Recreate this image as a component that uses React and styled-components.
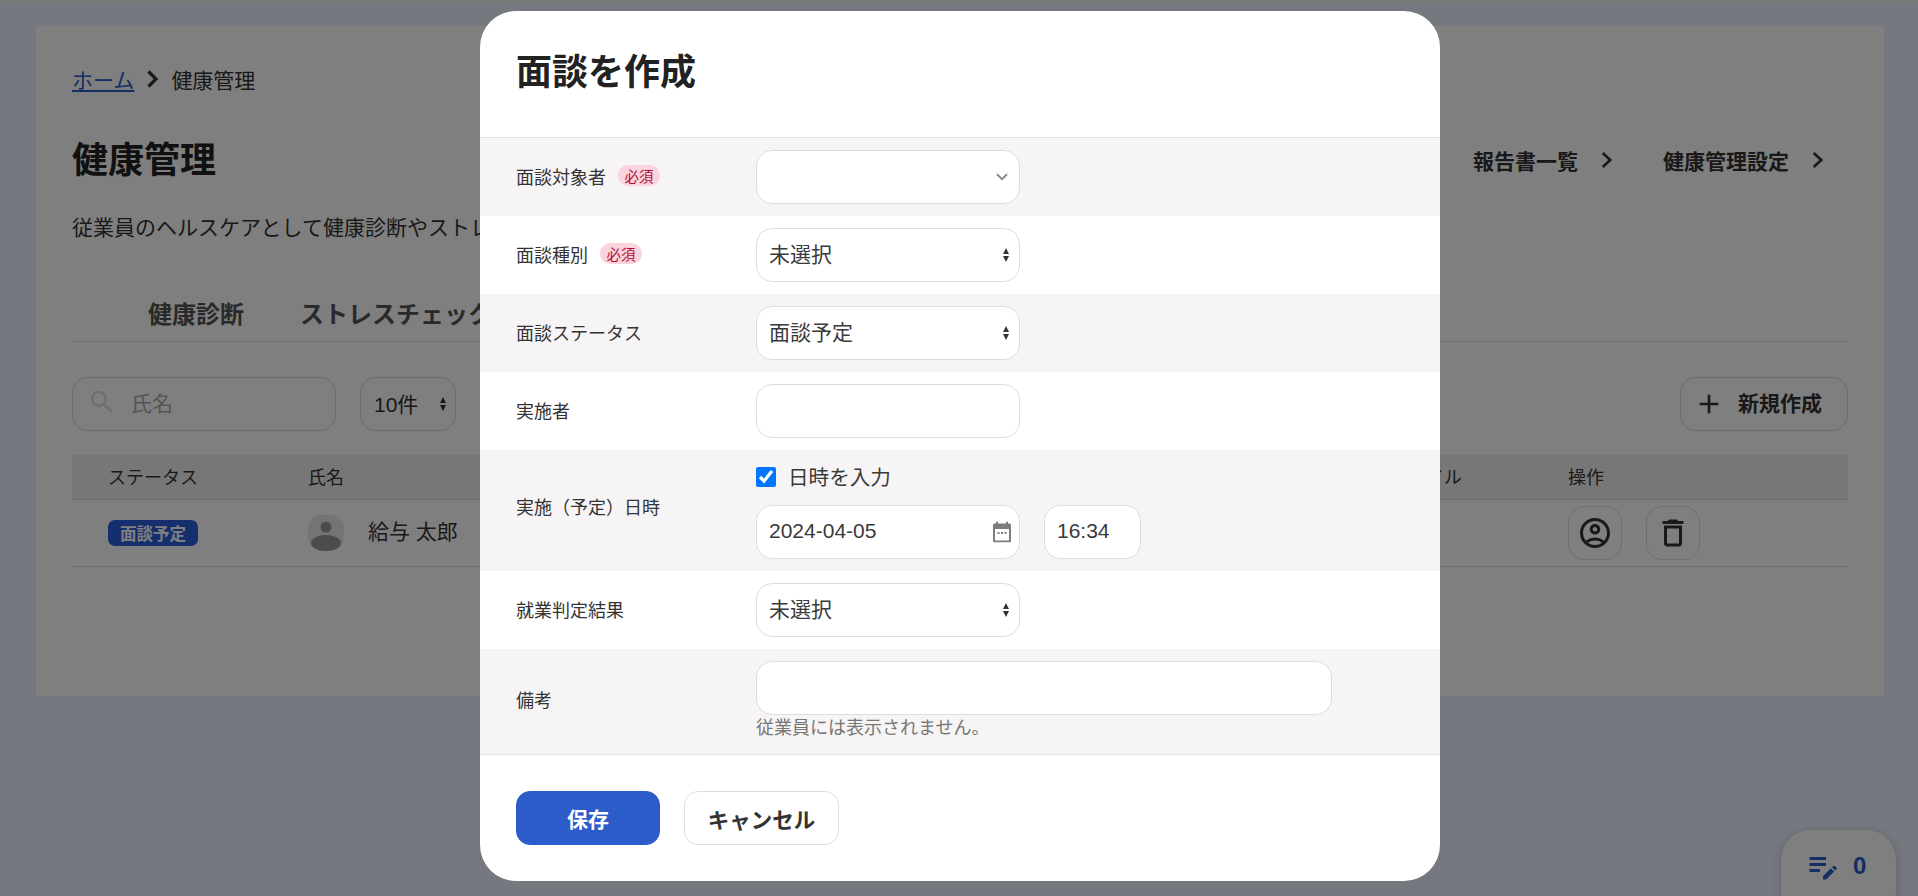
import React from 'react';
import styled, { createGlobalStyle } from 'styled-components';
import { MdOutlineAccountCircle, MdOutlineDelete, MdOutlineEditNote, MdSearch, MdAdd } from 'react-icons/md';

const FONT = `"Liberation Sans", "Noto Sans CJK JP", sans-serif`;

const Global = createGlobalStyle`
  html, body { margin: 0; padding: 0; height: 100%; overflow: hidden; }
  body { background: #eaf0fe; font-family: ${FONT}; color: #333; }
  * { box-sizing: border-box; }
  input, select, button { font-family: ${FONT}; }
`;

const Page = styled.div`
  width: 1918px;
  height: 896px;
  position: relative;
  overflow: hidden;
`;
const TopStrip = styled.div`
  height: 2px;
  background: #f6f4f6;
`;
const Card = styled.main`
  margin: 24px 34px 0 36px;
  width: 1848px;
  height: 670px;
  background: #fff;
  padding: 36px;
`;
const Crumbs = styled.nav`
  display: flex;
  align-items: center;
  height: 36px;
  padding-bottom: 2px;
  font-size: 21px;
  color: #333;
`;
const CrumbLink = styled.a`
  color: #2a5cc8;
  text-decoration: underline;
`;
const CrumbChevron = styled.svg`
  width: 14px;
  height: 18px;
  margin: 0 11px 0 12px;
`;
const TitleRow = styled.div`
  display: flex;
  justify-content: space-between;
  align-items: center;
  height: 54px;
  margin-top: 35px;
`;
const PageTitle = styled.h1`
  margin: -7px 0 0;
  font-size: 36px;
  font-weight: 700;
  color: #222;
`;
const SideLinks = styled.div`
  display: flex;
  align-items: center;
  margin-right: 24px;
`;
const SideLink = styled.a`
  display: flex;
  align-items: center;
  font-size: 21px;
  font-weight: 700;
  color: #333;
  margin-left: 50px;
`;
const SideChevron = styled.svg`
  width: 13px;
  height: 18px;
  margin-left: 22px;
`;
const Lead = styled.p`
  margin: 25px 0 0;
  font-size: 21px;
  line-height: 32px;
  color: #333;
`;
const Tabs = styled.div`
  display: flex;
  gap: 56px;
  margin-top: 53px;
  padding: 0 0 8px 76px;
  border-bottom: 1px solid #ddd;
`;
const Tab = styled.div`
  font-size: 24px;
  line-height: 36px;
  font-weight: 700;
  color: #555;
`;
const Toolbar = styled.div`
  display: flex;
  align-items: center;
  gap: 24px;
  margin-top: 35px;
`;
const Search = styled.div`
  width: 264px;
  height: 54px;
  display: flex;
  align-items: center;
  gap: 14px;
  padding: 0 0 4px 14px;
  border: 1px solid #d8d8d8;
  border-radius: 16px;
  font-size: 21px;
  color: #aaa;
`;
const CountSelect = styled.div`
  position: relative;
  width: 96px;
  height: 54px;
  display: flex;
  align-items: center;
  padding: 0 0 2px 13px;
  border: 1px solid #d8d8d8;
  border-radius: 16px;
  font-size: 21px;
  color: #333;
`;
const NewButton = styled.button`
  margin-left: auto;
  width: 168px;
  height: 54px;
  display: flex;
  align-items: center;
  gap: 13px;
  background: #fff;
  border: 1px solid #d8d8d8;
  border-radius: 16px;
  font-size: 21px;
  font-weight: 700;
  color: #333;
  padding: 0 0 0 12px;
`;
const LiftedText = styled.span`
  padding-bottom: ${p => p.$lift}px;
`;
const TableGrid = styled.div`
  display: grid;
  grid-template-columns: 200px 1082px 178px 316px;
  align-items: center;
  border-bottom: 1px solid #ddd;
`;
const TableHead = styled(TableGrid)`
  margin-top: 24px;
  height: 45px;
  padding-bottom: 2px;
  background: #eee;
  font-size: 18px;
  color: #333;
`;
const TableRow = styled(TableGrid)`
  height: 67px;
  font-size: 21px;
  color: #333;
`;
const Cell = styled.div`
  padding-left: 36px;
  display: flex;
  align-items: center;
  gap: 24px;
`;
const StatusBadge = styled.span`
  height: 26px;
  width: 90px;
  display: flex;
  align-items: center;
  justify-content: center;
  background: #2a5fdc;
  border-radius: 7px;
  color: #fff;
  font-size: 16.5px;
  font-weight: 700;
`;
const Avatar = styled.svg`
  width: 36px;
  height: 36px;
  flex: none;
`;
const IconButton = styled.button`
  width: 54px;
  height: 54px;
  display: flex;
  align-items: center;
  justify-content: center;
  padding: 0;
  background: #fff;
  border: 1px solid #ddd;
  border-radius: 16px;
  color: #333;
`;
const Fab = styled.div`
  position: absolute;
  left: 1781px;
  top: 830px;
  width: 115px;
  height: 90px;
  padding: 18px 0 0 24px;
  display: flex;
  align-items: flex-start;
  gap: 12px;
  background: #fff;
  border-radius: 30px;
  box-shadow: 0 2px 10px rgba(0, 0, 0, 0.18);
  color: #2a5cc8;
  font-size: 24px;
  font-weight: 700;
  line-height: 36px;
`;

const Overlay = styled.div`
  position: absolute;
  inset: 0;
  background: rgba(0, 0, 0, 0.5);
  display: flex;
  justify-content: center;
  align-items: flex-start;
  padding: 11px 0 0 2px;
`;
const Modal = styled.section`
  width: 960px;
  height: 870px;
  background: #fff;
  border-radius: 36px;
  overflow: hidden;
`;
const ModalHeader = styled.header`
  padding: 36px;
  border-bottom: 1px solid #e3e3e3;
`;
const ModalTitle = styled.h2`
  margin: 0;
  font-size: 36px;
  line-height: 52px;
  font-weight: 700;
  color: #222;
  height: 54px;
`;
const FormRow = styled.div`
  display: grid;
  grid-template-columns: 240px 1fr;
  align-items: center;
  padding: 12px 36px;
  background: ${p => (p.$alt ? '#f6f4f5' : '#fff')};
  border-bottom: ${p => (p.$last ? '1px solid #e5e5e5' : 'none')};
`;
const FieldLabel = styled.label`
  display: flex;
  align-items: center;
  gap: 12px;
  padding-bottom: ${p => p.$lift ?? 3}px;
  font-size: 18px;
  color: #333;
`;
const Required = styled.span`
  height: 21px;
  width: 42px;
  display: flex;
  align-items: center;
  justify-content: center;
  background: #fbd3dc;
  border-radius: 11px;
  font-size: 14.4px;
  color: #b01035;
`;
const ControlWrap = styled.div`
  position: relative;
  width: ${p => p.$w}px;
  flex: none;
`;
const fieldCss = `
  display: block;
  width: 100%;
  height: 54px;
  padding: 0 12px 2px;
  background: #fff;
  border: 1px solid #ddd;
  border-radius: 16px;
  font-size: 21px;
  color: #3a3a3a;
  outline: none;
  appearance: none;
`;
const FieldSelect = styled.select`${fieldCss}`;
const FieldInput = styled.input`${fieldCss}`;
const ControlIcon = styled.svg`
  position: absolute;
  pointer-events: none;
  top: 50%;
  transform: translateY(-50%);
  right: ${p => p.$r}px;
  width: ${p => p.$w}px;
  height: ${p => p.$h}px;
`;
const CheckLine = styled.label`
  display: flex;
  align-items: center;
  gap: 12px;
  height: 30px;
  margin-bottom: 13px;
  font-size: 20.6px;
  color: #3a3a3a;
`;
const CheckText = styled.span`
  padding-bottom: 2px;
`;
const CheckBox = styled.input`
  width: 20px;
  height: 20px;
  margin: 0;
  accent-color: #0075ff;
`;
const DateLine = styled.div`
  display: flex;
  gap: 24px;
`;
const Hint = styled.div`
  font-size: 18px;
  line-height: 27px;
  color: #777;
`;
const ModalFooter = styled.footer`
  display: flex;
  gap: 24px;
  padding: 36px;
`;
const PrimaryButton = styled.button`
  width: 144px;
  height: 54px;
  background: #2b5cc9;
  border: 1px solid #2b5cc9;
  border-radius: 14px;
  color: #fff;
  font-size: 21px;
  font-weight: 700;
`;
const GhostButton = styled.button`
  width: 155px;
  height: 54px;
  background: #fff;
  border: 1px solid #ddd;
  border-radius: 14px;
  color: #333;
  font-size: 21.5px;
  font-weight: 700;
  padding: 0;
`;

const Chevron = ({ as: C }) => (
  <C viewBox="0 0 12 16" fill="none">
    <path d="M2.500 1.500l7 6.500-7 6.500" stroke="#333" strokeWidth="2.400" />
  </C>
);
const Spin = ({ right = 11 }) => (
  <ControlIcon $r={right} $w={6} $h={14} viewBox="0 0 6 14">
    <path d="M3 0l3 6H0zM0 8h6l-3 6z" fill="#333" />
  </ControlIcon>
);

export default function App() {
  return (
    <Page>
      <Global />
      <TopStrip />
      <Card>
        <Crumbs>
          <CrumbLink>ホーム</CrumbLink>
          <CrumbChevron viewBox="0 0 14 18" fill="none">
            <path d="M2.500 1.500l7.500 7.500-7.500 7.500" stroke="#333" strokeWidth="3.200" />
          </CrumbChevron>
          <span>健康管理</span>
        </Crumbs>
        <TitleRow>
          <PageTitle>健康管理</PageTitle>
          <SideLinks>
            <SideLink>報告書一覧<Chevron as={SideChevron} /></SideLink>
            <SideLink>健康管理設定<Chevron as={SideChevron} /></SideLink>
          </SideLinks>
        </TitleRow>
        <Lead>従業員のヘルスケアとして健康診断やストレスチェックの結果を管理できます。</Lead>
        <Tabs>
          <Tab>健康診断</Tab>
          <Tab>ストレスチェック</Tab>
        </Tabs>
        <Toolbar>
          <Search><MdSearch size={30} color="#ddd" />氏名</Search>
          <CountSelect>10件<Spin right={9} /></CountSelect>
          <NewButton><MdAdd size={32} color="#333" /><LiftedText $lift={5}>新規作成</LiftedText></NewButton>
        </Toolbar>
        <TableHead>
          <Cell>ステータス</Cell>
          <Cell>氏名</Cell>
          <Cell>ファイル</Cell>
          <Cell>操作</Cell>
        </TableHead>
        <TableRow>
          <Cell><StatusBadge>面談予定</StatusBadge></Cell>
          <Cell>
            <Avatar viewBox="0 0 36 36">
              <rect width="36" height="36" rx="14" fill="#ebe7e7" />
              <circle cx="18" cy="12" r="5.500" fill="#9a9696" />
              <ellipse cx="18" cy="28" rx="15" ry="8" fill="#9a9696" />
            </Avatar>
            <LiftedText $lift={7}>給与 太郎</LiftedText>
          </Cell>
          <Cell />
          <Cell>
            <IconButton><MdOutlineAccountCircle size={36} /></IconButton>
            <IconButton><MdOutlineDelete size={36} /></IconButton>
          </Cell>
        </TableRow>
      </Card>
      <Fab>
        <MdOutlineEditNote size={36} />
        0
      </Fab>
      <Overlay>
        <Modal>
          <ModalHeader><ModalTitle>面談を作成</ModalTitle></ModalHeader>
          <FormRow $alt>
            <FieldLabel>面談対象者<Required>必須</Required></FieldLabel>
            <ControlWrap $w={264}>
              <FieldSelect defaultValue=""><option value=""></option></FieldSelect>
              <ControlIcon $r={12} $w={12} $h={8} viewBox="0 0 12 8" fill="none">
                <path d="M1 1.200l5 5 5-5" stroke="#8a8a8a" strokeWidth="2" />
              </ControlIcon>
            </ControlWrap>
          </FormRow>
          <FormRow>
            <FieldLabel>面談種別<Required>必須</Required></FieldLabel>
            <ControlWrap $w={264}>
              <FieldSelect><option>未選択</option></FieldSelect>
              <Spin />
            </ControlWrap>
          </FormRow>
          <FormRow $alt>
            <FieldLabel>面談ステータス</FieldLabel>
            <ControlWrap $w={264}>
              <FieldSelect><option>面談予定</option></FieldSelect>
              <Spin />
            </ControlWrap>
          </FormRow>
          <FormRow>
            <FieldLabel>実施者</FieldLabel>
            <ControlWrap $w={264}><FieldInput /></ControlWrap>
          </FormRow>
          <FormRow $alt>
            <FieldLabel $lift={10}>実施（予定）日時</FieldLabel>
            <div>
              <CheckLine><CheckBox type="checkbox" defaultChecked /><CheckText>日時を入力</CheckText></CheckLine>
              <DateLine>
                <ControlWrap $w={264}>
                  <FieldInput defaultValue="2024-04-05" />
                  <ControlIcon $r={9} $w={18} $h={21} viewBox="0 0 18 21">
                    <path d="M3 0h2v2h8V0h2v2h1.500A1.500 1.500 0 0 1 18 3.500v16a1.500 1.500 0 0 1-1.500 1.500h-15A1.500 1.500 0 0 1 0 19.500v-16A1.500 1.500 0 0 1 1.500 2H3zM2 7.500V19h14V7.500z" fill="#7d7d7d" />
                    <path d="M4.500 10.500h2v2h-2zM8 10.500h2v2H8zM11.500 10.500h2v2h-2z" fill="#7d7d7d" />
                  </ControlIcon>
                </ControlWrap>
                <ControlWrap $w={97}><FieldInput defaultValue="16:34" /></ControlWrap>
              </DateLine>
            </div>
          </FormRow>
          <FormRow>
            <FieldLabel>就業判定結果</FieldLabel>
            <ControlWrap $w={264}>
              <FieldSelect><option>未選択</option></FieldSelect>
              <Spin />
            </ControlWrap>
          </FormRow>
          <FormRow $alt $last>
            <FieldLabel $lift={5}>備考</FieldLabel>
            <div>
              <ControlWrap $w={576}><FieldInput /></ControlWrap>
              <Hint>従業員には表示されません。</Hint>
            </div>
          </FormRow>
          <ModalFooter>
            <PrimaryButton>保存</PrimaryButton>
            <GhostButton>キャンセル</GhostButton>
          </ModalFooter>
        </Modal>
      </Overlay>
    </Page>
  );
}
